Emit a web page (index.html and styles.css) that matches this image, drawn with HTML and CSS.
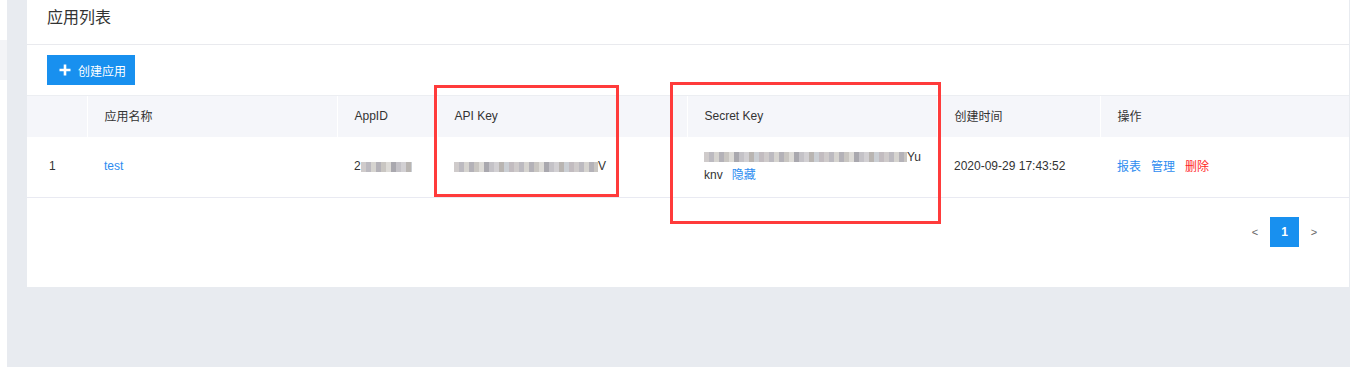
FILE: index.html
```html
<!DOCTYPE html>
<html lang="zh-CN">
<head>
<meta charset="utf-8">
<title>应用列表</title>
<link rel="stylesheet" href="styles.css">
</head>
<body>
<div class="page">
  <aside class="sidebar"><div class="side-item"></div></aside>
  <main class="main">
    <section class="card">
      <header class="card-head"><h1 class="card-title">应用列表</h1></header>
      <div class="toolbar">
        <button class="btn-primary" type="button">
          <svg class="plus" viewBox="0 0 12 12" width="12" height="12"><path d="M6 0.5v11M0.5 6h11" stroke="#fff" stroke-width="2.6" fill="none"/></svg>
          <span>创建应用</span>
        </button>
      </div>
      <table class="grid">
        <colgroup>
          <col class="c-idx"><col class="c-name"><col class="c-appid"><col class="c-api"><col class="c-secret"><col class="c-time"><col class="c-op">
        </colgroup>
        <thead>
          <tr>
            <th class="idx"></th>
            <th>应用名称</th>
            <th>AppID</th>
            <th>API Key</th>
            <th>Secret Key</th>
            <th>创建时间</th>
            <th>操作</th>
          </tr>
        </thead>
        <tbody>
          <tr>
            <td class="idx">1</td>
            <td><a class="link">test</a></td>
            <td><span class="txt">2</span><span class="mosaic m-appid"></span></td>
            <td><span class="mosaic m-api"></span><span class="txt">V</span></td>
            <td class="secret">
              <div class="line"><span class="mosaic m-secret"></span><span class="txt">Yu</span></div>
              <div class="line"><span class="txt">knv</span><a class="link hide">隐藏</a></div>
            </td>
            <td>2020-09-29 17:43:52</td>
            <td class="ops"><a class="link">报表</a><a class="link">管理</a><a class="link danger">删除</a></td>
          </tr>
        </tbody>
      </table>
      <nav class="pager">
        <span class="pg-arrow">&lt;</span>
        <span class="pg-num active">1</span>
        <span class="pg-arrow">&gt;</span>
      </nav>
    </section>
    <div class="mark mark-api"></div>
    <div class="mark mark-secret"></div>
  </main>
</div>
</body>
</html>
```

FILE: styles.css
```css
* { box-sizing: border-box; }
html, body { margin: 0; padding: 0; }
body {
  font-family: "Liberation Sans", Arial, "Noto Sans CJK SC", sans-serif;
  font-size: 12px;
  color: #333;
  background: #e8ebf0;
}
.page {
  display: flex;
  min-height: 367px;
}
.sidebar {
  width: 7px;
  background: #fff;
  padding-top: 40px;
}
.side-item {
  height: 40px;
  background: #f3f4f7;
}
.main {
  flex: 1;
  padding: 0 1px 0 20px;
  background: #e8ebf0;
  position: relative;
}
.card {
  background: #fff;
  height: 287px;
}
.card-head {
  height: 45px;
  border-bottom: 1px solid #e9eaee;
  padding: 5px 0 0 20px;
}
.card-title {
  margin: 0;
  font-size: 16px;
  font-weight: normal;
  line-height: 22px;
  color: #333;
  font-family: "Noto Sans CJK SC", sans-serif;
}
.toolbar {
  padding: 10px 20px;
}
.btn-primary {
  display: flex;
  align-items: center;
  gap: 7px;
  height: 30px;
  width: 88px;
  padding: 0 0 0 12px;
  border: 0;
  background: #1890ef;
  color: #fff;
  font-size: 12px;
  font-family: "Noto Sans CJK SC", sans-serif;
}
.plus { display: block; }
.grid {
  width: 100%;
  border-collapse: collapse;
  table-layout: fixed;
}
.c-idx { width: 60px; }
.c-name { width: 250px; }
.c-appid { width: 100px; }
.c-api { width: 250px; }
.c-secret { width: 250px; }
.c-time { width: 163px; }
.grid th {
  height: 41px;
  background: #f5f6fa;
  border-top: 1px solid #eceef2;
  border-left: 1px solid #fff;
  text-align: left;
  font-weight: normal;
  padding: 0 0 1px 17px;
  color: #333;
}
.grid th.idx { border-left: 0; }
.grid td {
  height: 61px;
  border-bottom: 1px solid #e9eaf2;
  padding: 0 0 2px 17px;
  vertical-align: middle;
  color: #333;
}
.grid td.idx { padding-left: 22px; }
.line {
  line-height: 18px;
  display: flex;
  align-items: center;
}
.link {
  color: #2d8cf0;
  cursor: pointer;
}
.link.danger { color: #ff1f1f; }
.hide { margin-left: 9px; }
.ops .link { margin-right: 10px; }
.mosaic {
  display: inline-block;
  height: 10px;
  vertical-align: middle;
  background-image: linear-gradient(90deg,
    #cfcbcb 0 5px, #bcbac0 5px 10px, #d6d4d0 10px 15px, #b4b2b8 15px 20px,
    #c9c6c2 20px 25px, #dddbd7 25px 30px, #a9a8ae 30px 35px, #c4c2c7 35px 40px,
    #d2d0d3 40px 45px, #b9b5b2 45px 50px, #cbcfd4 50px 55px, #c2bcc0 55px 60px);
  background-size: 60px 10px;
  background-repeat: repeat-x;
}
.m-appid { width: 51px; }
.m-api { width: 144px; }
.m-secret { width: 203px; }
.pager {
  display: flex;
  justify-content: flex-end;
  align-items: center;
  margin-top: 19px;
  padding-right: 20px;
}
.pg-arrow, .pg-num {
  width: 30px;
  height: 30px;
  display: flex;
  align-items: center;
  justify-content: center;
  font-size: 11px;
  color: #666;
}
.pg-num.active {
  background: #1890ef;
  color: #fff;
  font-size: 12px;
  font-weight: bold;
  width: 29px;
}
.mark {
  position: absolute;
  border: 3px solid #ff3b3b;
}
.mark-api {
  left: 427px;
  top: 85px;
  width: 185px;
  height: 112px;
}
.mark-secret {
  left: 663px;
  top: 82px;
  width: 271px;
  height: 142px;
}
```
